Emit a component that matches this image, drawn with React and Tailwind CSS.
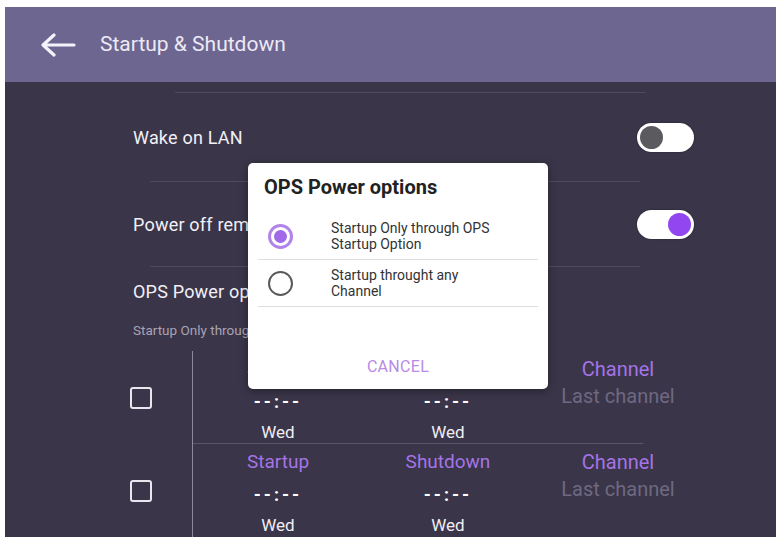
import React from "react";

const Toggle = ({ on }) => (
  <div className="w-[57px] h-[29px] rounded-full bg-white flex items-center px-[3px] shadow-[0_0_2px_rgba(0,0,0,0.4)]">
    {on ? (
      <div className="ml-auto w-[23px] h-[23px] rounded-full bg-[#9146ef]" />
    ) : (
      <div className="w-[23px] h-[23px] rounded-full bg-[#5b5a5e]" />
    )}
  </div>
);

const Radio = ({ checked }) =>
  checked ? (
    <div className="w-[25px] h-[25px] rounded-full border-[3px] border-[#b184ea] flex items-center justify-center">
      <div className="w-[13px] h-[13px] rounded-full bg-[#a06ae8]" />
    </div>
  ) : (
    <div className="w-[25px] h-[25px] rounded-full border-[2.5px] border-[#5a5a5a]" />
  );

const ScheduleRow = ({ border }) => (
  <div className="flex h-[93px]">
    <div className="w-[87px] flex items-center pl-[25px]">
      <div className="w-[22px] h-[22px] rounded-[3px] border-[2.5px] border-[#e8e6ee]" />
    </div>
    <div className="flex-1 flex border-l border-[#8d889c]">
      <div className={`flex w-[450px] ${border ? "border-b border-[#5a556a]" : ""}`}>
        {["Startup", "Shutdown"].map((h) => (
          <div key={h} className="w-[170px] shrink-0 flex flex-col items-center pt-[7px]">
            <div className="text-[19px] leading-[22px] text-[#a574e6]">{h}</div>
            <div className="text-[18px] leading-[22px] text-white font-bold mt-[11px] tracking-[3px]">--:--</div>
            <div className="text-[17px] leading-[20px] text-[#f0eef5] mt-[9px]">Wed</div>
          </div>
        ))}
        <div className="w-[170px] shrink-0 flex flex-col items-center pt-[7px]">
          <div className="text-[20px] leading-[22px] text-[#a574e6]">Channel</div>
          <div className="text-[20px] leading-[22px] text-[#6e6981] mt-[5px]">Last channel</div>
        </div>
      </div>
    </div>
  </div>
);

const App = () => {
  return (
    <div
      className="w-[781px] h-[543px] bg-white pt-[7px] px-[5px] pb-[6px]"
      style={{ fontFamily: "Roboto, 'Noto Sans', sans-serif" }}
    >
      <div className="relative w-full h-full bg-[#3a3548] flex flex-col overflow-hidden">
        <div className="h-[75px] shrink-0 bg-[#6c6690] flex items-center">
          <svg width="36" height="24" viewBox="0 0 36 24" className="ml-[35px]">
            <path d="M34 12H4M14 2L3 12l11 10" fill="none" stroke="#f4f2fa" strokeWidth="3.2" strokeLinecap="round" strokeLinejoin="round" />
          </svg>
          <div className="ml-[24px] text-[21px] text-[#ece9f4]">Startup &amp; Shutdown</div>
        </div>

        <div className="h-[10px] shrink-0" />
        <div className="ml-[170px] mr-[130px] h-px shrink-0 bg-[#4f4a60]" />

        <div className="flex items-center h-[88px] shrink-0 pl-[128px] pr-[82px]">
          <div className="text-[18px] text-[#f2f0f7] tracking-[0.2px]">Wake on LAN</div>
          <div className="ml-auto"><Toggle on={false} /></div>
        </div>
        <div className="ml-[145px] mr-[136px] h-px shrink-0 bg-[#4f4a60]" />

        <div className="flex items-center h-[84px] shrink-0 pl-[128px] pr-[82px]">
          <div className="text-[18px] text-[#f2f0f7] tracking-[0.2px]">Power off reminder</div>
          <div className="ml-auto"><Toggle on={true} /></div>
        </div>
        <div className="ml-[145px] mr-[136px] h-px shrink-0 bg-[#4f4a60]" />

        <div className="pl-[128px] pt-[14px] shrink-0">
          <div className="text-[18px] leading-[22px] text-[#f2f0f7] tracking-[0.2px]">OPS Power options</div>
          <div className="text-[13.5px] leading-[16px] text-[#a8a4b6] mt-[19px]">Startup Only through OPS Startup Option</div>
        </div>

        <div className="mt-[13px] ml-[100px] flex flex-col shrink-0">
          <ScheduleRow border />
          <ScheduleRow />
        </div>

        <div className="absolute left-[243px] top-[156px] w-[300px] h-[226px] bg-white rounded-[5px] shadow-[0_2px_8px_rgba(0,0,0,0.35)] flex flex-col">
          <div className="pl-[16px] pt-[12px] text-[20px] leading-[24px] font-bold text-[#222]">OPS Power options</div>
          <div className="mt-[14px] mx-[10px] flex flex-col">
            <div className="flex items-center h-[47px] border-b border-[#dedede]">
              <div className="ml-[10px]"><Radio checked /></div>
              <div className="ml-[38px] text-[14px] leading-[16px] text-[#333]">
                Startup Only through OPS<br />Startup Option
              </div>
            </div>
            <div className="flex items-center h-[47px] border-b border-[#dedede]">
              <div className="ml-[10px]"><Radio /></div>
              <div className="ml-[38px] text-[14px] leading-[16px] text-[#333]">
                Startup throught any<br />Channel
              </div>
            </div>
          </div>
          <div className="mt-[48px] text-center text-[16px] text-[#b88ce4] tracking-[0.3px]">CANCEL</div>
        </div>
      </div>
    </div>
  );
};

export default App;
